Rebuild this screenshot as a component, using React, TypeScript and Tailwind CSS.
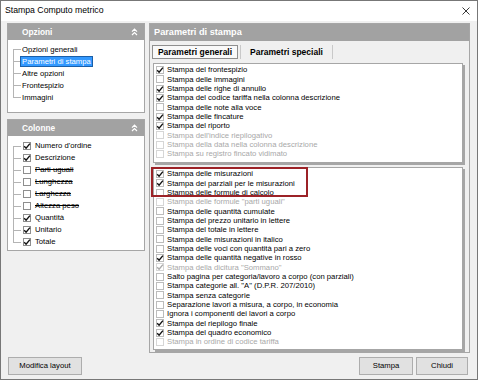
type Item = [string, boolean, boolean];

const generali: Item[] = [
  ['Stampa del frontespizio', true, false],
  ['Stampa delle immagini', false, false],
  ['Stampa delle righe di annullo', true, false],
  ['Stampa del codice tariffa nella colonna descrizione', true, false],
  ['Stampa delle note alla voce', false, false],
  ['Stampa delle fincature', true, false],
  ['Stampa del riporto', true, false],
  ["Stampa dell'indice riepilogativo", false, true],
  ['Stampa della data nella colonna descrizione', false, true],
  ['Stampa su registro fincato vidimato', false, true],
];

const misurazioni: Item[] = [
  ['Stampa delle misurazioni', true, false],
  ['Stampa dei parziali per le misurazioni', true, false],
  ['Stampa delle formule di calcolo', false, false],
  ['Stampa delle formule "parti uguali"', false, true],
  ['Stampa delle quantità cumulate', false, false],
  ['Stampa del prezzo unitario in lettere', false, false],
  ['Stampa del totale in lettere', false, false],
  ['Stampa delle misurazioni in italico', false, false],
  ['Stampa delle voci con quantità pari a zero', false, false],
  ['Stampa delle quantità negative in rosso', true, false],
  ['Stampa della dicitura "Sommano"', true, true],
  ['Salto pagina per categoria/lavoro a corpo (con parziali)', false, false],
  ['Stampa categorie all. "A" (D.P.R. 207/2010)', false, false],
  ['Stampa senza categorie', false, false],
  ['Separazione lavori a misura, a corpo, in economia', false, false],
  ['Ignora i componenti dei lavori a corpo', false, false],
  ['Stampa del riepilogo finale', true, false],
  ['Stampa del quadro economico', true, false],
  ['Stampa in ordine di codice tariffa', false, true],
];

const colonne: [string, boolean, boolean][] = [
  ["Numero d'ordine", true, false],
  ['Descrizione', true, false],
  ['Parti uguali', false, true],
  ['Lunghezza', false, true],
  ['Larghezza', false, true],
  ['Altezza peso', false, true],
  ['Quantità', true, false],
  ['Unitario', true, false],
  ['Totale', true, false],
];

const opzioni = ['Opzioni generali', 'Parametri di stampa', 'Altre opzioni', 'Frontespizio', 'Immagini'];

const Check = ({ checked, disabled, dark }: { checked: boolean; disabled?: boolean; dark?: boolean }) => (
  <span
    className={`relative w-[8px] h-[8px] shrink-0 border bg-white ${
      disabled ? 'border-[#d6d6d6]' : dark ? 'border-[#8e8e8e]' : 'border-[#bcbcbc]'
    }`}
  >
    {checked && (
      <svg viewBox="0 0 8 8" className="absolute left-[-1px] top-[-1px] w-[8px] h-[8px] overflow-visible">
        <path
          d="M1.2 4.2 L3.1 6.2 L6.9 1.6"
          fill="none"
          stroke={disabled ? '#a9a9a9' : '#111'}
          strokeWidth="1.4"
        />
      </svg>
    )}
  </span>
);

const Tree = ({ first, last }: { first?: boolean; last?: boolean }) => (
  <div className="w-[8px] self-stretch flex flex-col shrink-0">
    <div className={`flex-1 border-[#b4b4b4] ${first ? '' : 'border-l'}`} />
    <div className={`flex-1 border-[#b4b4b4] border-t ${last ? '' : 'border-l'}`} />
  </div>
);

const Chevrons = () => (
  <svg viewBox="0 0 7 8" className="w-[7px] h-[8px]">
    <path d="M1 3.6 L3.5 1.2 L6 3.6 M1 7 L3.5 4.6 L6 7" fill="none" stroke="#fff" strokeWidth="1.2" />
  </svg>
);

const SideHeader = ({ title }: { title: string }) => (
  <div className="h-[16px] bg-[#a2a2a2] flex items-center justify-between pl-[14px] pr-[6px] shrink-0">
    <span className="text-white font-bold text-[8.3px]">{title}</span>
    <Chevrons />
  </div>
);

const ListBox = ({ items, className }: { items: Item[]; className: string }) => (
  <div className={`bg-white border border-[#a6a6a6] shadow-[2px_2px_0_#a6a6a6] pt-[1.5px] pl-[2px] ${className}`}>
    {items.map(([label, checked, disabled]) => (
      <div key={label} className="h-[9.33px] flex items-center gap-[3px]">
        <Check checked={checked} disabled={disabled} />
        <span className={`whitespace-nowrap text-[7.7px] leading-none ${disabled ? 'text-[#a8a8a8]' : 'text-black'}`}>
          {label}
        </span>
      </div>
    ))}
  </div>
);

const App = () => {
  return (
    <div className="w-[478px] h-[380px] flex flex-col border border-[#777] bg-[#f0f0f0] font-['Liberation_Sans',Arial,sans-serif] text-black overflow-hidden">
      <div className="h-[20px] bg-white flex items-center justify-between pl-[4px] pr-[7px] shrink-0">
        <span className="text-[8.7px]">Stampa Computo metrico</span>
        <svg viewBox="0 0 8 8" className="w-[8px] h-[8px]">
          <path d="M0.5 0.5 L7.5 7.5 M7.5 0.5 L0.5 7.5" stroke="#222" strokeWidth="0.9" />
        </svg>
      </div>

      <div className="flex pt-[2px] pl-[6px] pr-[7px] gap-[4px] h-[332px] shrink-0">
        <div className="w-[138px] flex flex-col gap-[6px] shrink-0">
          <div className="h-[90px] flex flex-col border border-[#a6a6a6]">
            <SideHeader title="Opzioni" />
            <div className="flex-1 bg-white pl-[5px] pt-[3px]">
              {opzioni.map((o, i) => (
                <div key={o} className="h-[12px] flex items-center">
                  <Tree first={i === 0} last={i === opzioni.length - 1} />
                  <span
                    className={`text-[7.7px] leading-[9px] px-[1px] ${
                      i === 1 ? 'bg-[#3399ff] text-white outline outline-1 outline-[#1b5fa8]' : ''
                    }`}
                  >
                    {o}
                  </span>
                </div>
              ))}
            </div>
          </div>

          <div className="h-[132px] flex flex-col border border-[#a6a6a6]">
            <SideHeader title="Colonne" />
            <div className="flex-1 bg-white pl-[5px] pt-[4px]">
              {colonne.map(([c, checked, strike], i) => (
                <div key={c} className="h-[12px] flex items-center">
                  <Tree first={i === 0} last={i === colonne.length - 1} />
                  <span className="ml-[2px] mr-[4px] flex">
                    <Check checked={checked} dark />
                  </span>
                  <span className={`text-[7.7px] leading-none ${strike ? 'line-through' : ''}`}>{c}</span>
                </div>
              ))}
            </div>
          </div>
        </div>

        <div className="flex-1 h-[330px] flex flex-col border border-[#a6a6a6]">
          <div className="h-[17px] bg-[#a2a2a2] flex items-center pl-[4px] shrink-0">
            <span className="text-white font-bold text-[9.2px]">Parametri di stampa</span>
          </div>
          <div className="flex-1 flex flex-col pl-[3px] pr-[6px]">
            <div className="mt-[4px] mb-[4px] h-[14px] flex gap-[2px] -ml-[1px]">
              <div className="w-[86px] border border-[#8f8f8f] bg-[#f9f9f9] flex items-center justify-center">
                <span className="font-bold text-[8.5px]">Parametri generali</span>
              </div>
              <div className="w-[93px] border-l border-r border-[#c9c9c9] flex items-center justify-center">
                <span className="font-bold text-[8.5px]">Parametri speciali</span>
              </div>
            </div>
            <ListBox items={generali} className="h-[100px]" />
            <div className="relative mt-[4px]">
              <ListBox items={misurazioni} className="h-[183px]" />
              <div className="absolute left-[-2px] top-0 w-[157px] h-[30px] border-2 border-[#9c2227]" />
            </div>
          </div>
        </div>
      </div>

      <div className="flex justify-between items-center mt-[4px] h-[18px] pl-[7px] pr-[9px] shrink-0">
        <button className="w-[74px] h-[18px] bg-[#e1e1e1] border border-[#adadad] text-[7.7px]">Modifica layout</button>
        <div className="flex gap-[3px]">
          <button className="w-[54px] h-[18px] bg-[#e1e1e1] border border-[#adadad] text-[7.7px]">Stampa</button>
          <button className="w-[52px] h-[18px] bg-[#e1e1e1] border border-[#adadad] text-[7.7px]">Chiudi</button>
        </div>
      </div>
    </div>
  );
};

export default App;
